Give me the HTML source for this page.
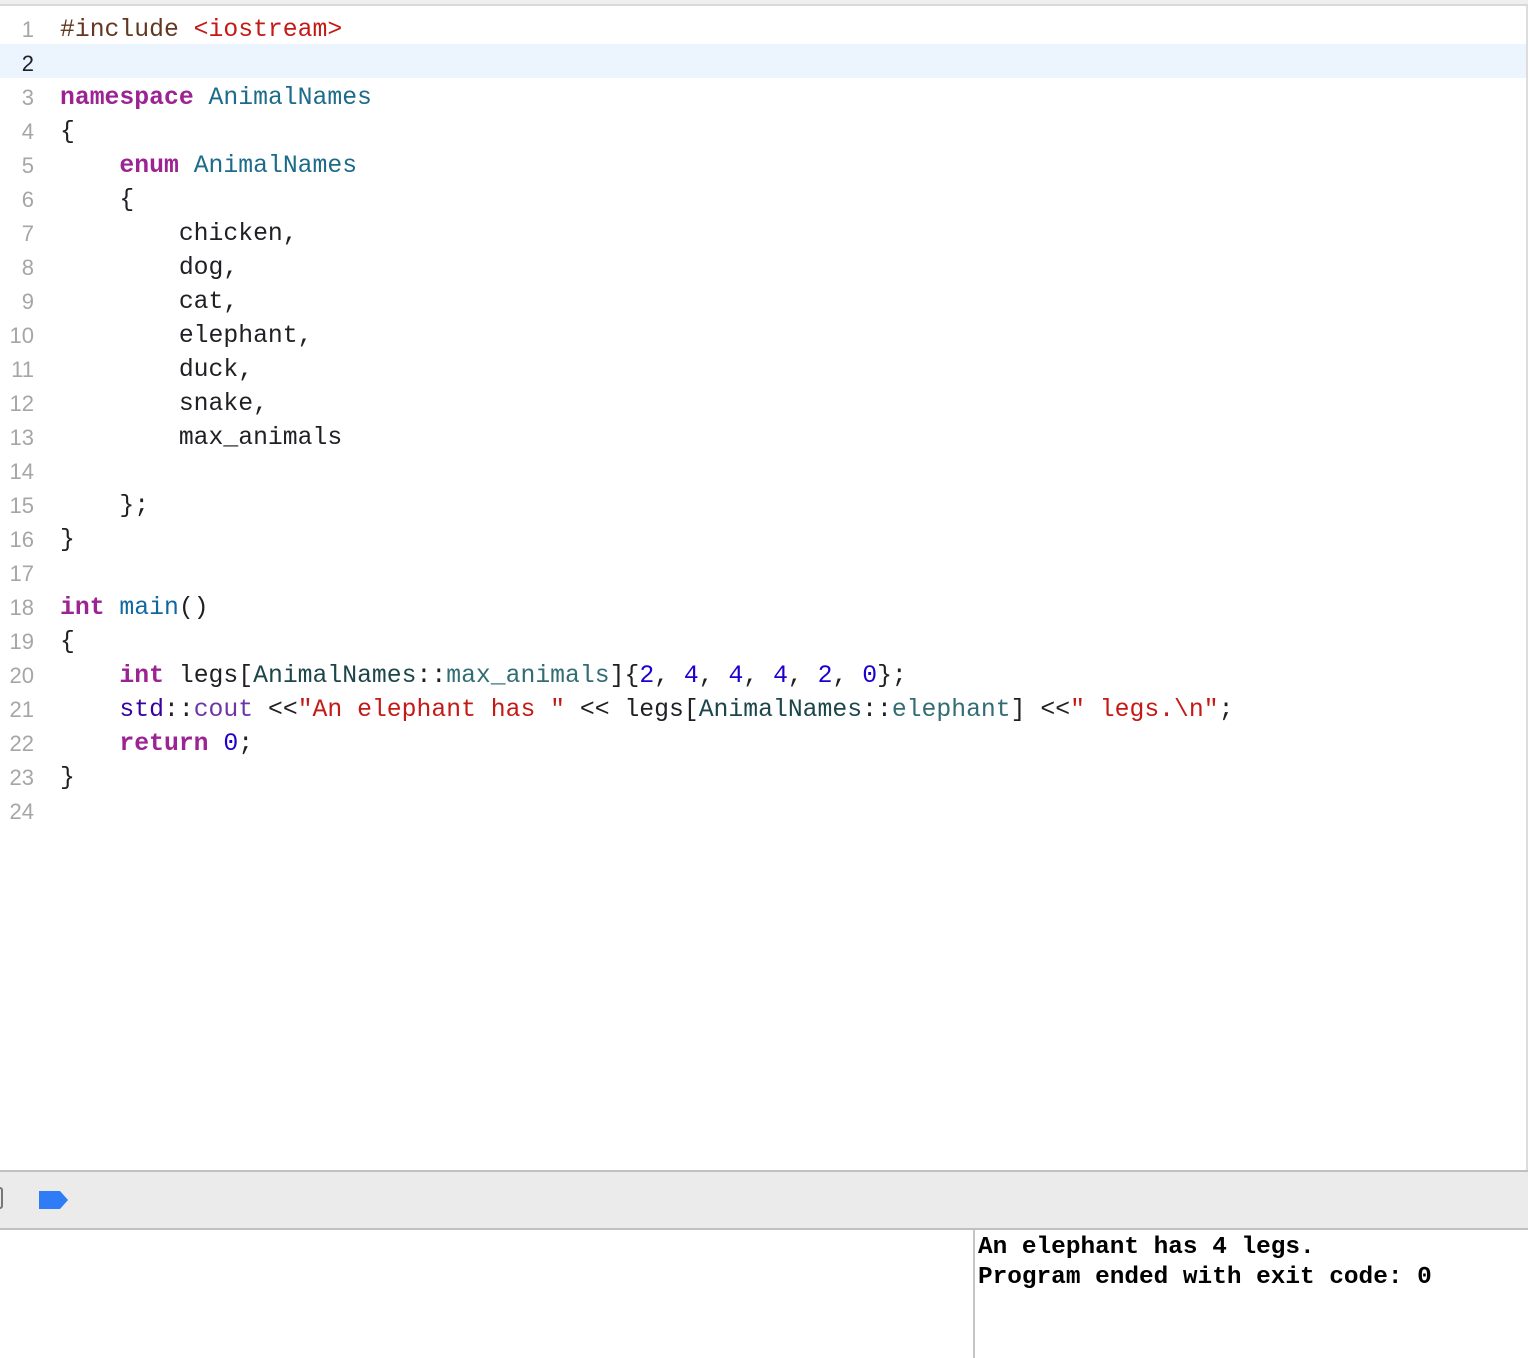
<!DOCTYPE html>
<html><head><meta charset="utf-8"><style>
*{margin:0;padding:0;box-sizing:border-box}
body{width:1528px;height:1358px;background:#fff;position:relative;overflow:hidden;font-family:"Liberation Mono",monospace}
.top{position:absolute;left:0;top:0;width:1528px;height:6px;background:#efefef;border-bottom:2px solid #d9d9d9}
.rb{position:absolute;left:1526px;top:6px;width:2px;height:1164px;background:#dcdcdc}
.ln{position:absolute;left:0;width:34px;text-align:right;font-size:22px;color:#a6a6a6;font-family:"Liberation Sans",sans-serif;line-height:34px;margin-top:3px}
.cl{position:absolute;left:60px;font-size:24.75px;line-height:34px;color:#1f1f24;white-space:pre;margin-top:3px}
.hl{position:absolute;left:0;top:44px;width:1526px;height:34px;background:#ecf4fe}
.k{color:#9b2393;font-weight:bold}
.pp{color:#643820}.s{color:#c41a16}.t{color:#1c6b8a}.n{color:#1c00cf}
.ns{color:#1c464a}.ec{color:#326d74}.std{color:#3900a0}.co{color:#6c36a9}.fn{color:#0f68a0}
.bar{position:absolute;left:0;top:1170px;width:1528px;height:60px;background:#ebebeb;border-top:2px solid #c0c0c0;border-bottom:2px solid #c0c0c0}
.con{position:absolute;left:973px;top:1230px;width:2px;height:128px;background:#c4c4c4}
.out{position:absolute;left:978px;top:1233px;font-size:24.4px;line-height:30px;font-weight:bold;color:#000;white-space:pre}
</style></head><body>
<div class="top"></div>
<div class="hl"></div>
<div class="rb"></div>
<div class="ln" style="top:10px">1</div>
<div class="ln" style="top:44px;color:#1f1f24">2</div>
<div class="ln" style="top:78px">3</div>
<div class="ln" style="top:112px">4</div>
<div class="ln" style="top:146px">5</div>
<div class="ln" style="top:180px">6</div>
<div class="ln" style="top:214px">7</div>
<div class="ln" style="top:248px">8</div>
<div class="ln" style="top:282px">9</div>
<div class="ln" style="top:316px">10</div>
<div class="ln" style="top:350px">11</div>
<div class="ln" style="top:384px">12</div>
<div class="ln" style="top:418px">13</div>
<div class="ln" style="top:452px">14</div>
<div class="ln" style="top:486px">15</div>
<div class="ln" style="top:520px">16</div>
<div class="ln" style="top:554px">17</div>
<div class="ln" style="top:588px">18</div>
<div class="ln" style="top:622px">19</div>
<div class="ln" style="top:656px">20</div>
<div class="ln" style="top:690px">21</div>
<div class="ln" style="top:724px">22</div>
<div class="ln" style="top:758px">23</div>
<div class="ln" style="top:792px">24</div>
<div class="cl" style="top:10px"><span class="pp">#include </span><span class="s">&lt;iostream&gt;</span></div>
<div class="cl" style="top:78px"><span class="k">namespace</span> <span class="t">AnimalNames</span></div>
<div class="cl" style="top:112px">{</div>
<div class="cl" style="top:146px">    <span class="k">enum</span> <span class="t">AnimalNames</span></div>
<div class="cl" style="top:180px">    {</div>
<div class="cl" style="top:214px">        chicken,</div>
<div class="cl" style="top:248px">        dog,</div>
<div class="cl" style="top:282px">        cat,</div>
<div class="cl" style="top:316px">        elephant,</div>
<div class="cl" style="top:350px">        duck,</div>
<div class="cl" style="top:384px">        snake,</div>
<div class="cl" style="top:418px">        max_animals</div>
<div class="cl" style="top:486px">    };</div>
<div class="cl" style="top:520px">}</div>
<div class="cl" style="top:588px"><span class="k">int</span> <span class="fn">main</span>()</div>
<div class="cl" style="top:622px">{</div>
<div class="cl" style="top:656px">    <span class="k">int</span> legs[<span class="ns">AnimalNames</span>::<span class="ec">max_animals</span>]{<span class="n">2</span>, <span class="n">4</span>, <span class="n">4</span>, <span class="n">4</span>, <span class="n">2</span>, <span class="n">0</span>};</div>
<div class="cl" style="top:690px">    <span class="std">std</span>::<span class="co">cout</span> &lt;&lt;<span class="s">"An elephant has "</span> &lt;&lt; legs[<span class="ns">AnimalNames</span>::<span class="ec">elephant</span>] &lt;&lt;<span class="s">" legs.\n"</span>;</div>
<div class="cl" style="top:724px">    <span class="k">return</span> <span class="n">0</span>;</div>
<div class="cl" style="top:758px">}</div>
<div class="bar">
  <div style="position:absolute;left:-4px;top:15px;width:7px;height:22px;border:2px solid #777;border-radius:3px"></div>
  <svg style="position:absolute;left:39px;top:19px" width="30" height="18" viewBox="0 0 30 18"><path d="M0 0H21L29 9L21 18H0Z" fill="#2f7cf6"/></svg>
</div>
<div class="con"></div>
<div class="out">An elephant has 4 legs.
Program ended with exit code: 0</div>
</body></html>
